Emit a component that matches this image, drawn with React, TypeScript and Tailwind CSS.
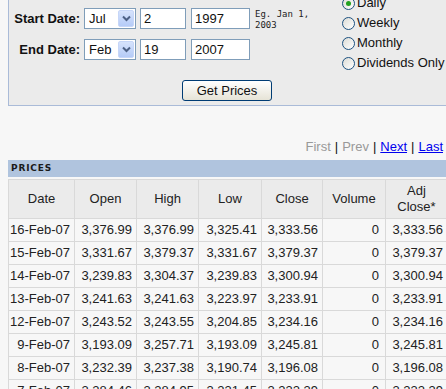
import React from 'react';

const rows = [
  ['16-Feb-07', '3,376.99', '3,376.99', '3,325.41', '3,333.56', '0', '3,333.56'],
  ['15-Feb-07', '3,331.67', '3,379.37', '3,331.67', '3,379.37', '0', '3,379.37'],
  ['14-Feb-07', '3,239.83', '3,304.37', '3,239.83', '3,300.94', '0', '3,300.94'],
  ['13-Feb-07', '3,241.63', '3,241.63', '3,223.97', '3,233.91', '0', '3,233.91'],
  ['12-Feb-07', '3,243.52', '3,243.55', '3,204.85', '3,234.16', '0', '3,234.16'],
  ['9-Feb-07', '3,193.09', '3,257.71', '3,193.09', '3,245.81', '0', '3,245.81'],
  ['8-Feb-07', '3,232.39', '3,237.38', '3,190.74', '3,196.08', '0', '3,196.08'],
  ['7-Feb-07', '3,284.46', '3,284.95', '3,231.45', '3,232.39', '0', '3,232.39'],
];

const colWidths = [66, 62, 62, 63, 61, 63, 62];

function SelectBox({ value }: { value: string }) {
  return (
    <div className="flex items-center justify-between w-[52px] h-[21px] bg-white border border-[#7f9db9] pl-[4px] pr-[1px]">
      <span className="text-[13px] text-[#111]">{value}</span>
      <span className="flex items-center justify-center w-[16px] h-[17px] rounded-[2px] bg-gradient-to-b from-[#d6e3fc] to-[#b5cbf7] border border-[#c6d6f8]">
        <svg width="9" height="7" viewBox="0 0 9 7">
          <path d="M1 1.5 L4.5 5 L8 1.5" fill="none" stroke="#4d6185" strokeWidth="2" />
        </svg>
      </span>
    </div>
  );
}

function TextBox({ value, w }: { value: string; w: string }) {
  return (
    <div className={`${w} h-[21px] bg-white border border-[#7f9db9] pl-[3px] flex items-center text-[13px] text-[#111]`}>
      {value}
    </div>
  );
}

function Radio({ label, checked }: { label: string; checked?: boolean }) {
  return (
    <div className="flex items-center h-[20px] gap-[2px]">
      <span className="flex items-center justify-center w-[13px] h-[13px] rounded-full border border-[#1c5180] bg-gradient-to-br from-[#dcdcd6] to-white">
        {checked && <span className="w-[5px] h-[5px] rounded-full bg-[#21a121]" />}
      </span>
      <span className="text-[13px] text-[#111]">{label}</span>
    </div>
  );
}

export default function App() {
  return (
    <div className="w-[446px] h-[389px] overflow-hidden bg-[#f7f7f7] pl-[8px] font-['Liberation_Sans',Arial,sans-serif]">
      {/* Date form panel */}
      <div className="-mt-[10px] flex bg-[#ebebeb] border-l border-b border-[#aabbd8] pb-[3px]">
        <div className="w-[333px] pt-[18px]">
          <div className="flex items-start">
            <label className="w-[71px] h-[21px] flex items-center justify-end text-[13px] font-bold text-[#111]">
              Start Date:
            </label>
            <div className="ml-[4px]">
              <SelectBox value="Jul" />
            </div>
            <div className="ml-[4px]">
              <TextBox value="2" w="w-[46px]" />
            </div>
            <div className="ml-[5px]">
              <TextBox value="1997" w="w-[59px]" />
            </div>
            <div className="ml-[5px] pt-[1px] font-['DejaVu_Sans_Mono',monospace] text-[9px] leading-[11px] text-[#222]">
              Eg. Jan 1,
              <br />
              2003
            </div>
          </div>
          <div className="flex items-start mt-[8px]">
            <label className="w-[71px] h-[21px] flex items-center justify-end text-[13px] font-bold text-[#111]">
              End Date:
            </label>
            <div className="ml-[4px]">
              <SelectBox value="Feb" />
            </div>
            <div className="ml-[4px]">
              <TextBox value="19" w="w-[46px]" />
            </div>
            <div className="ml-[5px]">
              <TextBox value="2007" w="w-[59px]" />
            </div>
          </div>
          <button
            type="button"
            className="mt-[20px] ml-[173px] w-[90px] h-[21px] rounded-[3px] border border-[#003c74] bg-gradient-to-b from-white to-[#e6e3d6] text-[13px] text-[#111] leading-none"
          >
            Get Prices
          </button>
        </div>
        <div className="pt-[3px]">
          <Radio label="Daily" checked />
          <Radio label="Weekly" />
          <Radio label="Monthly" />
          <Radio label="Dividends Only" />
        </div>
      </div>

      {/* Pagination */}
      <div className="flex justify-end pr-[3px] pt-[33px] h-[54px] text-[13px] leading-[16px]">
        <span className="text-[#999]">First</span>
        <span className="text-[#111] px-[4px]">|</span>
        <span className="text-[#999]">Prev</span>
        <span className="text-[#111] px-[4px]">|</span>
        <a href="#" className="text-[#0000ee] underline">Next</a>
        <span className="text-[#111] px-[4px]">|</span>
        <a href="#" className="text-[#0000ee] underline">Last</a>
      </div>

      {/* Prices table */}
      <div className="h-[17px] bg-[#b0c4de] flex items-center pl-[3px] font-['DejaVu_Sans',sans-serif] text-[9px] font-bold tracking-[0.8px] text-[#1a1a1a]">
        PRICES
      </div>
      <table className="mt-[2px] table-fixed border-collapse w-[439px] text-[13px] text-[#222]">
        <colgroup>
          {colWidths.map((w, i) => (
            <col key={i} style={{ width: w }} />
          ))}
        </colgroup>
        <thead>
          <tr className="bg-[#ebebeb]">
            {['Date', 'Open', 'High', 'Low', 'Close', 'Volume'].map((h) => (
              <th key={h} className="h-[39px] border border-[#d9d9d9] font-normal text-center leading-[16px]">
                {h}
              </th>
            ))}
            <th className="h-[39px] border border-[#d9d9d9] font-normal text-center leading-[16px]">
              Adj
              <br />
              Close*
            </th>
          </tr>
        </thead>
        <tbody>
          {rows.map((r) => (
            <tr key={r[0]}>
              {r.map((c, i) => (
                <td
                  key={i}
                  className={`h-[23px] border border-[#d9d9d9] text-right leading-[16px] ${i === 5 ? 'pr-[6px]' : 'pr-[4px]'}`}
                >
                  {c}
                </td>
              ))}
            </tr>
          ))}
        </tbody>
      </table>
    </div>
  );
}
